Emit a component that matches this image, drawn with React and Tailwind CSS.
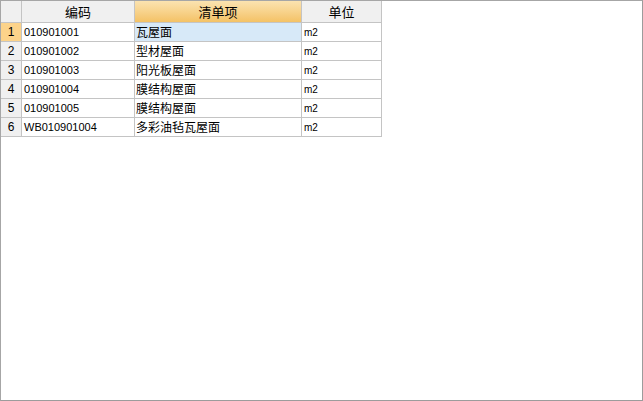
import React from 'react'

var rows = [
  { code: '010901001', name: '瓦屋面', unit: 'm2' },
  { code: '010901002', name: '型材屋面', unit: 'm2' },
  { code: '010901003', name: '阳光板屋面', unit: 'm2' },
  { code: '010901004', name: '膜结构屋面', unit: 'm2' },
  { code: '010901005', name: '膜结构屋面', unit: 'm2' },
  { code: 'WB010901004', name: '多彩油毡瓦屋面', unit: 'm2' },
]

export default function App() {
  return (
    <div className="w-[643px] h-[401px] bg-white border border-[#a6a6a6] border-r-[#9c9c9c] border-b-[#9c9c9c] box-border overflow-hidden text-black">
      <div className="grid grid-cols-[21px_113px_167px_80px] w-max">
        {/* header */}
        <div className="h-[22px] bg-[#f0f0f0] border-r border-b border-[#c4c4c4]" />
        <div className="h-[22px] bg-[#f0f0f0] border-r border-b border-[#c4c4c4] flex items-center justify-center text-[13px] font-['Noto_Sans_CJK_SC',sans-serif]">编码</div>
        <div className="h-[22px] bg-gradient-to-b from-[#fbe3b0] to-[#f4c265] border-r border-b border-[#c4c4c4] flex items-center justify-center text-[13px] font-['Noto_Sans_CJK_SC',sans-serif]">清单项</div>
        <div className="h-[22px] bg-[#f0f0f0] border-r border-b border-[#c4c4c4] flex items-center justify-center text-[13px] font-['Noto_Sans_CJK_SC',sans-serif]">单位</div>

        {rows.map(function(r, i) {
          var first = i === 0
          return (
            <React.Fragment key={i}>
              <div className={'h-[19px] border-r border-b border-[#c4c4c4] flex items-center justify-center text-[12px] font-["Liberation_Sans",sans-serif] ' + (first ? 'bg-[#fcd38a]' : 'bg-[#f0f0f0]')}>{i + 1}</div>
              <div className="h-[19px] border-r border-b border-[#c4c4c4] flex items-center pl-[2px] text-[11px] font-['Liberation_Sans',sans-serif]">{r.code}</div>
              <div className={'h-[19px] border-r border-b border-[#c4c4c4] flex items-center pl-[1px] text-[12px] font-["Noto_Sans_CJK_SC",sans-serif] ' + (first ? 'bg-[#d7e9f8]' : '')}>{r.name}</div>
              <div className="h-[19px] border-r border-b border-[#c4c4c4] flex items-center pl-[2px] text-[10px] font-['Liberation_Sans',sans-serif]">{r.unit}</div>
            </React.Fragment>
          )
        })}
      </div>
    </div>
  )
}
